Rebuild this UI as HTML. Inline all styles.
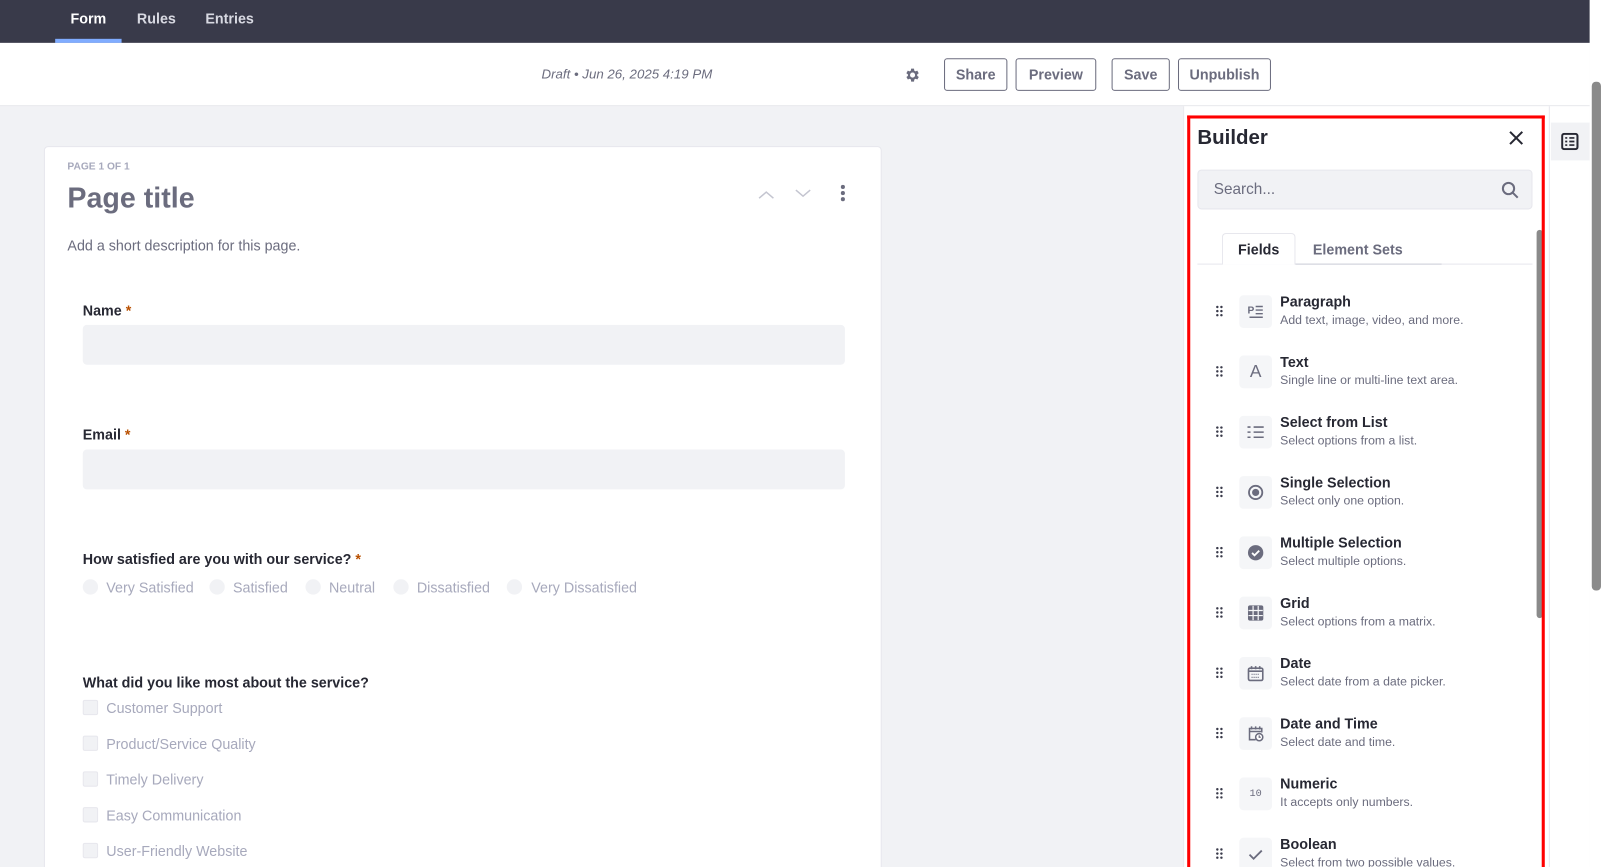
<!DOCTYPE html>
<html><head><meta charset="utf-8"><style>
*{box-sizing:border-box;margin:0;padding:0}
html,body{width:1602px;height:867px;overflow:hidden;background:#fff;font-family:"Liberation Sans",sans-serif}
#s{position:absolute;left:0;top:0;width:1568px;height:849px;transform:scale(1.02168);transform-origin:0 0;background:#f1f2f5;overflow:hidden}
.a{position:absolute}
.nav{left:0;top:0;width:1556px;height:42px;background:#393a4a}
.nav span{position:absolute;top:10px;font-size:14px;font-weight:bold;color:#d8d9e2}
.bar{left:0;top:42px;width:1556px;height:62px;background:#fff;border-bottom:1px solid #e5e6ea}
.btn{position:absolute;top:57px;height:32px;border:1px solid #6b6c7e;border-radius:3px;background:#fff;font-size:14px;font-weight:bold;color:#6b6c7e;text-align:center;line-height:30px}
.card{left:43px;top:143px;width:820px;height:720px;background:#fff;border:1px solid #e7e7ed;border-radius:4px}
.lbl{position:absolute;left:81px;font-size:14px;font-weight:bold;color:#272833}
.lbl b{color:#b95000}
.inp{position:absolute;left:81px;width:746px;height:39px;background:#f1f2f5;border-radius:4px}
.opt{position:absolute;font-size:14px;color:#a7a9bc}
.rd{position:absolute;width:15px;height:15px;border-radius:50%;background:#f1f2f5}
.cb{position:absolute;left:81px;width:15px;height:15px;border-radius:2px;background:#f1f2f5;border:1px solid #e7e7ed}
.panel{left:1158px;top:104px;width:358px;height:760px;background:#fff;border-left:1px solid #e7e7ed}
.red{left:1162px;top:113px;width:350px;height:750px;border:3px solid #f00;border-bottom:none}
.it{position:absolute;left:1187px;width:300px;height:40px}
.it .d{position:absolute;left:3px;top:10px;width:8px;font-size:0}
.it .ib{position:absolute;left:26px;top:0;width:32px;height:32px;background:#f5f6f8;border-radius:4px;display:flex;align-items:center;justify-content:center;color:#6b6c7e}
.it .t{position:absolute;left:66px;top:-2px;font-size:14px;font-weight:bold;color:#272833}
.it .s{position:absolute;left:66px;top:17px;font-size:12px;color:#6b6c7e;white-space:nowrap}
</style></head><body><div id="s">
<div class="a nav"><span style="left:69px;color:#fff">Form</span><span style="left:134px">Rules</span><span style="left:201px">Entries</span>
<div class="a" style="left:54px;top:38px;width:65px;height:4px;background:#80acff"></div></div>
<div class="a bar"></div>
<div class="a" style="left:530px;top:65px;font-size:13px;font-style:italic;color:#6b6c7e">Draft • Jun 26, 2025 4:19 PM</div>
<svg class="a" style="left:884px;top:65px" width="17" height="17" viewBox="0 0 24 24"><path fill="#6b6c7e" d="M19.4 13a7.5 7.5 0 000-2l2.1-1.6-2-3.5-2.5 1a7 7 0 00-1.7-1L15 3h-4l-.4 2.9a7 7 0 00-1.7 1l-2.5-1-2 3.5L6.6 11a7.5 7.5 0 000 2l-2.1 1.6 2 3.5 2.5-1a7 7 0 001.7 1L11 21h4l.4-2.9a7 7 0 001.7-1l2.5 1 2-3.5zM13 15.5a3.5 3.5 0 110-7 3.5 3.5 0 010 7z"/></svg>
<div class="btn" style="left:924px;width:62px">Share</div>
<div class="btn" style="left:994px;width:79px">Preview</div>
<div class="btn" style="left:1088px;width:57px">Save</div>
<div class="btn" style="left:1153px;width:91px">Unpublish</div>

<div class="a card"></div>
<div class="a" style="left:66px;top:158px;font-size:10px;font-weight:bold;color:#a7a9bc">PAGE 1 OF 1</div>
<div class="a" style="left:66px;top:178px;font-size:28px;font-weight:bold;color:#6b6c7e">Page title</div>
<svg class="a" style="left:740px;top:180px" width="100" height="20"><path d="M3 14l7-6 7 6" stroke="#c4c5d0" stroke-width="1.5" fill="none"/><path d="M39 6l7 6 7-6" stroke="#c4c5d0" stroke-width="1.5" fill="none"/><circle cx="85" cy="3" r="2" fill="#6b6c7e"/><circle cx="85" cy="9" r="2" fill="#6b6c7e"/><circle cx="85" cy="15" r="2" fill="#6b6c7e"/></svg>
<div class="a" style="left:66px;top:232px;font-size:14px;color:#6b6c7e">Add a short description for this page.</div>
<div class="lbl" style="top:296px">Name <b>*</b></div>
<div class="inp" style="top:318px"></div>
<div class="lbl" style="top:417px">Email <b>*</b></div>
<div class="inp" style="top:440px"></div>
<div class="lbl" style="top:539px">How satisfied are you with our service? <b>*</b></div>
<div class="rd" style="left:81px;top:567px"></div><div class="opt" style="left:104px;top:567px">Very Satisfied</div>
<div class="rd" style="left:205px;top:567px"></div><div class="opt" style="left:228px;top:567px">Satisfied</div>
<div class="rd" style="left:299px;top:567px"></div><div class="opt" style="left:322px;top:567px">Neutral</div>
<div class="rd" style="left:385px;top:567px"></div><div class="opt" style="left:408px;top:567px">Dissatisfied</div>
<div class="rd" style="left:496px;top:567px"></div><div class="opt" style="left:520px;top:567px">Very Dissatisfied</div>
<div class="lbl" style="top:660px">What did you like most about the service?</div>
<div class="cb" style="top:685px"></div><div class="opt" style="left:104px;top:685px">Customer Support</div>
<div class="cb" style="top:720px"></div><div class="opt" style="left:104px;top:720px">Product/Service Quality</div>
<div class="cb" style="top:755px"></div><div class="opt" style="left:104px;top:755px">Timely Delivery</div>
<div class="cb" style="top:790px"></div><div class="opt" style="left:104px;top:790px">Easy Communication</div>
<div class="cb" style="top:825px"></div><div class="opt" style="left:104px;top:825px">User-Friendly Website</div>

<div class="a panel"></div>
<div class="a" style="left:1516px;top:104px;width:40px;height:745px;background:#fff;border-left:1px solid #e7e7ed"></div>
<div class="a" style="left:1518px;top:120px;width:38px;height:37px;background:#f1f2f5"></div>
<svg class="a" style="left:1528px;top:130px" width="17" height="17" viewBox="0 0 17 17"><rect x="1" y="1" width="15" height="15" rx="2" fill="none" stroke="#272833" stroke-width="2"/><path d="M4 5h2M8 5h5M4 8.5h2M8 8.5h5M4 12h2M8 12h5" stroke="#272833" stroke-width="1.6"/></svg>
<div class="a" style="left:1556px;top:0;width:12px;height:849px;background:#fff"></div>
<div class="a" style="left:1558px;top:80px;width:9px;height:498px;background:#8a8a8a;border-radius:4px"></div>

<div class="a" style="left:1172px;top:124px;font-size:20px;font-weight:bold;color:#272833">Builder</div>
<svg class="a" style="left:1476px;top:127px" width="16" height="16"><path d="M2 2l12 12M14 2L2 14" stroke="#272833" stroke-width="2"/></svg>
<div class="a" style="left:1172px;top:166px;width:328px;height:39px;background:#f1f2f5;border:1px solid #e7e7ed;border-radius:4px"></div>
<div class="a" style="left:1188px;top:177px;font-size:15px;color:#6b6c7e">Search...</div>
<svg class="a" style="left:1469px;top:177px" width="18" height="18"><circle cx="7.5" cy="7.5" r="5.5" fill="none" stroke="#6b6c7e" stroke-width="2"/><path d="M11.5 11.5l5 5" stroke="#6b6c7e" stroke-width="2"/></svg>
<div class="a" style="left:1172px;top:258px;width:328px;height:1px;background:#e7e7ed"></div>
<div class="a" style="left:1196px;top:228px;width:72px;height:31px;background:#fff;border:1px solid #e7e7ed;border-bottom:none;border-radius:4px 4px 0 0;font-size:14px;font-weight:bold;color:#272833;text-align:center;line-height:30px">Fields</div>
<div class="a" style="left:1285px;top:236px;font-size:14px;font-weight:bold;color:#6b6c7e">Element Sets</div>
<div class="a" style="left:1268px;top:258px;width:143px;height:1px;background:#cdced9"></div>
<div class="a" style="left:1504px;top:225px;width:6px;height:380px;background:#8a8a8a;border-radius:3px"></div>

<svg width="0" height="0" style="position:absolute"><defs><g id="dg"><circle cx="1.5" cy="1.5" r="1.2" fill="#393a4a"/><circle cx="5.5" cy="1.5" r="1.2" fill="#393a4a"/><circle cx="1.5" cy="5.5" r="1.2" fill="#393a4a"/><circle cx="5.5" cy="5.5" r="1.2" fill="#393a4a"/><circle cx="1.5" cy="9.5" r="1.2" fill="#393a4a"/><circle cx="5.5" cy="9.5" r="1.2" fill="#393a4a"/></g></defs></svg>

<div class="it" style="top:289px"><svg class="d" width="8" height="12"><use href="#dg"/></svg><div class="ib"><svg width="16" height="16"><text x="0" y="10" font-size="10" font-weight="bold" fill="#6b6c7e" font-family="Liberation Sans">P</text><path d="M8 3h7M8 6.5h7M8 10h7M2 13.5h13" stroke="#6b6c7e" stroke-width="1.4"/></svg></div><div class="t">Paragraph</div><div class="s">Add text, image, video, and more.</div></div>
<div class="it" style="top:348px"><svg class="d" width="8" height="12"><use href="#dg"/></svg><div class="ib" style="font-size:17px">A</div><div class="t">Text</div><div class="s">Single line or multi-line text area.</div></div>
<div class="it" style="top:407px"><svg class="d" width="8" height="12"><use href="#dg"/></svg><div class="ib"><svg width="16" height="16"><path d="M0 3h3M6 3h10M0 8h3M6 8h10M0 13h3M6 13h10" stroke="#6b6c7e" stroke-width="1.5"/></svg></div><div class="t">Select from List</div><div class="s">Select options from a list.</div></div>
<div class="it" style="top:466px"><svg class="d" width="8" height="12"><use href="#dg"/></svg><div class="ib"><svg width="16" height="16"><circle cx="8" cy="8" r="6.5" fill="none" stroke="#6b6c7e" stroke-width="1.8"/><circle cx="8" cy="8" r="3.5" fill="#6b6c7e"/></svg></div><div class="t">Single Selection</div><div class="s">Select only one option.</div></div>
<div class="it" style="top:525px"><svg class="d" width="8" height="12"><use href="#dg"/></svg><div class="ib"><svg width="16" height="16"><circle cx="8" cy="8" r="7.5" fill="#6b6c7e"/><path d="M4.5 8.2l2.4 2.4 4.6-4.6" stroke="#fff" stroke-width="1.8" fill="none"/></svg></div><div class="t">Multiple Selection</div><div class="s">Select multiple options.</div></div>
<div class="it" style="top:584px"><svg class="d" width="8" height="12"><use href="#dg"/></svg><div class="ib"><svg width="16" height="16"><rect x="0.5" y="0.5" width="15" height="15" rx="2" fill="#6b6c7e"/><path d="M5.5 1v14M10.5 1v14M1 5.5h14M1 10.5h14" stroke="#f5f6f8" stroke-width="1.2"/></svg></div><div class="t">Grid</div><div class="s">Select options from a matrix.</div></div>
<div class="it" style="top:643px"><svg class="d" width="8" height="12"><use href="#dg"/></svg><div class="ib"><svg width="16" height="16"><rect x="1" y="3" width="14" height="12" rx="1.5" fill="none" stroke="#6b6c7e" stroke-width="1.6"/><path d="M4 1v3M8 1v3M12 1v3M1 6h14" stroke="#6b6c7e" stroke-width="1.6"/><path d="M4 9h8M4 12h8" stroke="#6b6c7e" stroke-width="1.2" stroke-dasharray="1 1"/></svg></div><div class="t">Date</div><div class="s">Select date from a date picker.</div></div>
<div class="it" style="top:702px"><svg class="d" width="8" height="12"><use href="#dg"/></svg><div class="ib"><svg width="16" height="16"><path d="M8 14H2V3h12v4M4 1v3M8 1v3M12 1v3M2 6h12" fill="none" stroke="#6b6c7e" stroke-width="1.5"/><circle cx="11.5" cy="11.5" r="3.5" fill="#fff" stroke="#6b6c7e" stroke-width="1.5"/><path d="M11.5 9.8v1.8h1.5" stroke="#6b6c7e" stroke-width="1.2" fill="none"/></svg></div><div class="t">Date and Time</div><div class="s">Select date and time.</div></div>
<div class="it" style="top:761px"><svg class="d" width="8" height="12"><use href="#dg"/></svg><div class="ib" style="font-family:'Liberation Mono',monospace;font-size:10px">10</div><div class="t">Numeric</div><div class="s">It accepts only numbers.</div></div>
<div class="it" style="top:820px"><svg class="d" width="8" height="12"><use href="#dg"/></svg><div class="ib"><svg width="16" height="16"><path d="M2 8.5l4 4 8-8" stroke="#6b6c7e" stroke-width="1.8" fill="none"/></svg></div><div class="t">Boolean</div><div class="s">Select from two possible values.</div></div>

<div class="a red"></div>
</div></body></html>
